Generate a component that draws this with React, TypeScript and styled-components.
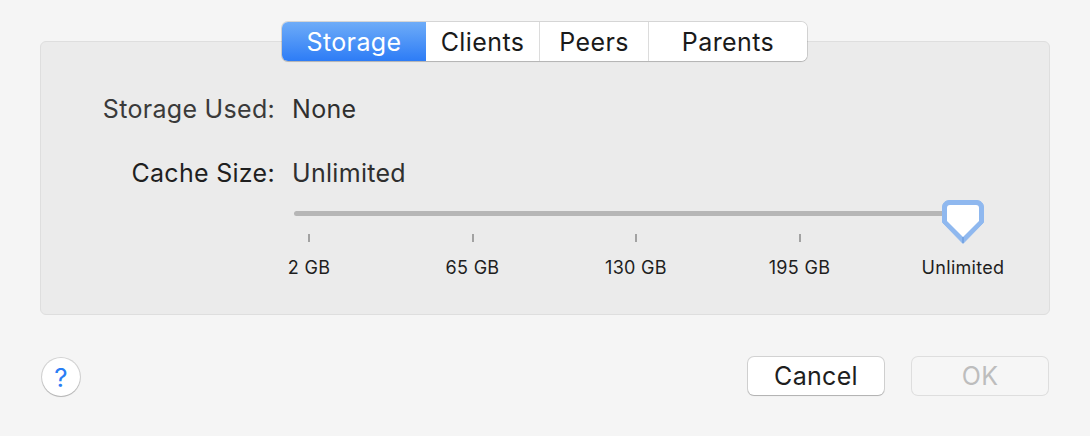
import React from "react";
import styled, { createGlobalStyle } from "styled-components";

const Global = createGlobalStyle`
  html, body { margin: 0; padding: 0; background: #f5f5f5; }
  body { font-family: Inter, "Noto Sans", "Liberation Sans", sans-serif; -webkit-font-smoothing: antialiased; }
`;

const Window = styled.div`
  width: 1090px;
  height: 436px;
  box-sizing: border-box;
  padding: 22px 40px 0 40px;
  background: #f5f5f5;
`;

const TabsRow = styled.div`
  display: flex;
  justify-content: center;
  margin-bottom: -20px;
  position: relative;
  z-index: 1;
  padding-right: 1px;
`;

const Segmented = styled.div`
  display: flex;
  height: 39px;
  border-radius: 6px;
  background: #fff;
  box-shadow: 0 0 0 1px rgba(0, 0, 0, 0.13), 0 1px 1px rgba(0, 0, 0, 0.12);
  overflow: hidden;
`;

const Segment = styled.div<{ $active?: boolean; $w: number }>`
  width: ${(p) => p.$w}px;
  display: flex;
  align-items: center;
  justify-content: center;
  font-size: 25px;
  letter-spacing: 0.4px;
  color: ${(p) => (p.$active ? "#fff" : "#1a1a1a")};
  background: ${(p) => (p.$active ? "linear-gradient(#6eacf8, #2d7cf6)" : "#fff")};
  border-left: ${(p) => (p.$active ? "none" : "1px solid #dcdcdc")};
  &:nth-child(2) { border-left: none; }
`;

const Panel = styled.div`
  height: 272px;
  background: #ebebeb;
  border: 1px solid #dedede;
  border-radius: 6px;
  box-sizing: content-box;
`;

const Form = styled.div`
  display: grid;
  grid-template-columns: 234px 1fr;
  column-gap: 17px;
  padding-top: 51px;
`;

const Label = styled.div<{ $dim?: boolean }>`
  text-align: right;
  font-size: 25px;
  letter-spacing: 0.3px;
  line-height: 32px;
  color: ${(p) => (p.$dim ? "#3a3a3a" : "#1f1f1f")};
`;

const Value = styled.div`
  font-size: 25px;
  letter-spacing: 0.3px;
  line-height: 32px;
  color: #2f2f2f;
`;

const RowGap = styled.div`
  grid-column: 1 / span 2;
  height: 32px;
`;

const SliderWrap = styled.div`
  margin-left: 228px;
  width: 734px;
  margin-top: 22px;
  position: relative;
`;

const Track = styled.div`
  margin-left: 25px;
  margin-right: 40px;
  height: 5px;
  border-radius: 3px;
  background: #b6b6b6;
`;

const Thumb = styled.svg`
  position: absolute;
  left: 672px;
  top: -12px;
`;

const Ticks = styled.div`
  display: flex;
  justify-content: space-between;
  margin-top: 18px;
`;

const TickCol = styled.div`
  width: 80px;
  display: flex;
  flex-direction: column;
  align-items: center;
`;

const TickMark = styled.div`
  width: 2px;
  height: 8px;
  background: #a2a2a2;
`;

const TickLabel = styled.div`
  margin-top: 15px;
  font-size: 18px;
  letter-spacing: 0.3px;
  line-height: 22px;
  color: #1e1e1e;
  white-space: nowrap;
`;

const Footer = styled.div`
  display: flex;
  align-items: center;
  padding: 41px 2px 0 2px;
`;

const HelpButton = styled.div`
  width: 38px;
  height: 38px;
  border-radius: 50%;
  background: #fff;
  box-shadow: 0 0 0 1px rgba(0, 0, 0, 0.14), 0 1px 1px rgba(0, 0, 0, 0.15);
  display: flex;
  align-items: center;
  justify-content: center;
  color: #2a7ef5;
  font-size: 26px;
  margin-top: 2px;
`;

const Spacer = styled.div`
  flex: 1;
`;

const Button = styled.div<{ $disabled?: boolean }>`
  width: 136px;
  height: 38px;
  border-radius: 6px;
  display: flex;
  align-items: center;
  justify-content: center;
  font-size: 25px;
  letter-spacing: 0.3px;
  color: ${(p) => (p.$disabled ? "#bdbdbd" : "#1e1e1e")};
  background: ${(p) => (p.$disabled ? "#f6f6f6" : "#fff")};
  box-shadow: ${(p) =>
    p.$disabled
      ? "0 0 0 1px rgba(0,0,0,0.09)"
      : "0 0 0 1px rgba(0,0,0,0.14), 0 1px 1px rgba(0,0,0,0.16)"};
  & + & { margin-left: 28px; }
`;

const ticks = ["2 GB", "65 GB", "130 GB", "195 GB", "Unlimited"];

export default function App() {
  return (
    <>
      <Global />
      <Window>
        <TabsRow>
          <Segmented>
            <Segment $active $w={144}>Storage</Segment>
            <Segment $w={113}>Clients</Segment>
            <Segment $w={108}>Peers</Segment>
            <Segment $w={158}>Parents</Segment>
          </Segmented>
        </TabsRow>
        <Panel>
          <Form>
            <Label $dim>Storage Used:</Label>
            <Value>None</Value>
            <RowGap />
            <Label>Cache Size:</Label>
            <Value>Unlimited</Value>
          </Form>
          <SliderWrap>
            <Track />
            <Thumb width="44" height="46" viewBox="0 0 44 46">
              <path
                d="M8 1.5 H36 A6.5 6.5 0 0 1 42.5 8 V23.5 L22 44.5 L1.5 23.5 V8 A6.5 6.5 0 0 1 8 1.5 Z"
                fill="#8fb8ef"
                stroke="#8fb8ef"
                strokeLinejoin="round"
                strokeWidth="1"
              />
              <path
                d="M9 6 H35 A3 3 0 0 1 38 9 V22 L22 38 L6 22 V9 A3 3 0 0 1 9 6 Z"
                fill="#ffffff"
              />
              <line x1="22" y1="38" x2="22" y2="44" stroke="#6f9fde" strokeWidth="1.5" />
            </Thumb>
            <Ticks>
              {ticks.map((t) => (
                <TickCol key={t}>
                  <TickMark />
                  <TickLabel>{t}</TickLabel>
                </TickCol>
              ))}
            </Ticks>
          </SliderWrap>
        </Panel>
        <Footer>
          <HelpButton>?</HelpButton>
          <Spacer />
          <Button>Cancel</Button>
          <Button $disabled>OK</Button>
        </Footer>
      </Window>
    </>
  );
}
